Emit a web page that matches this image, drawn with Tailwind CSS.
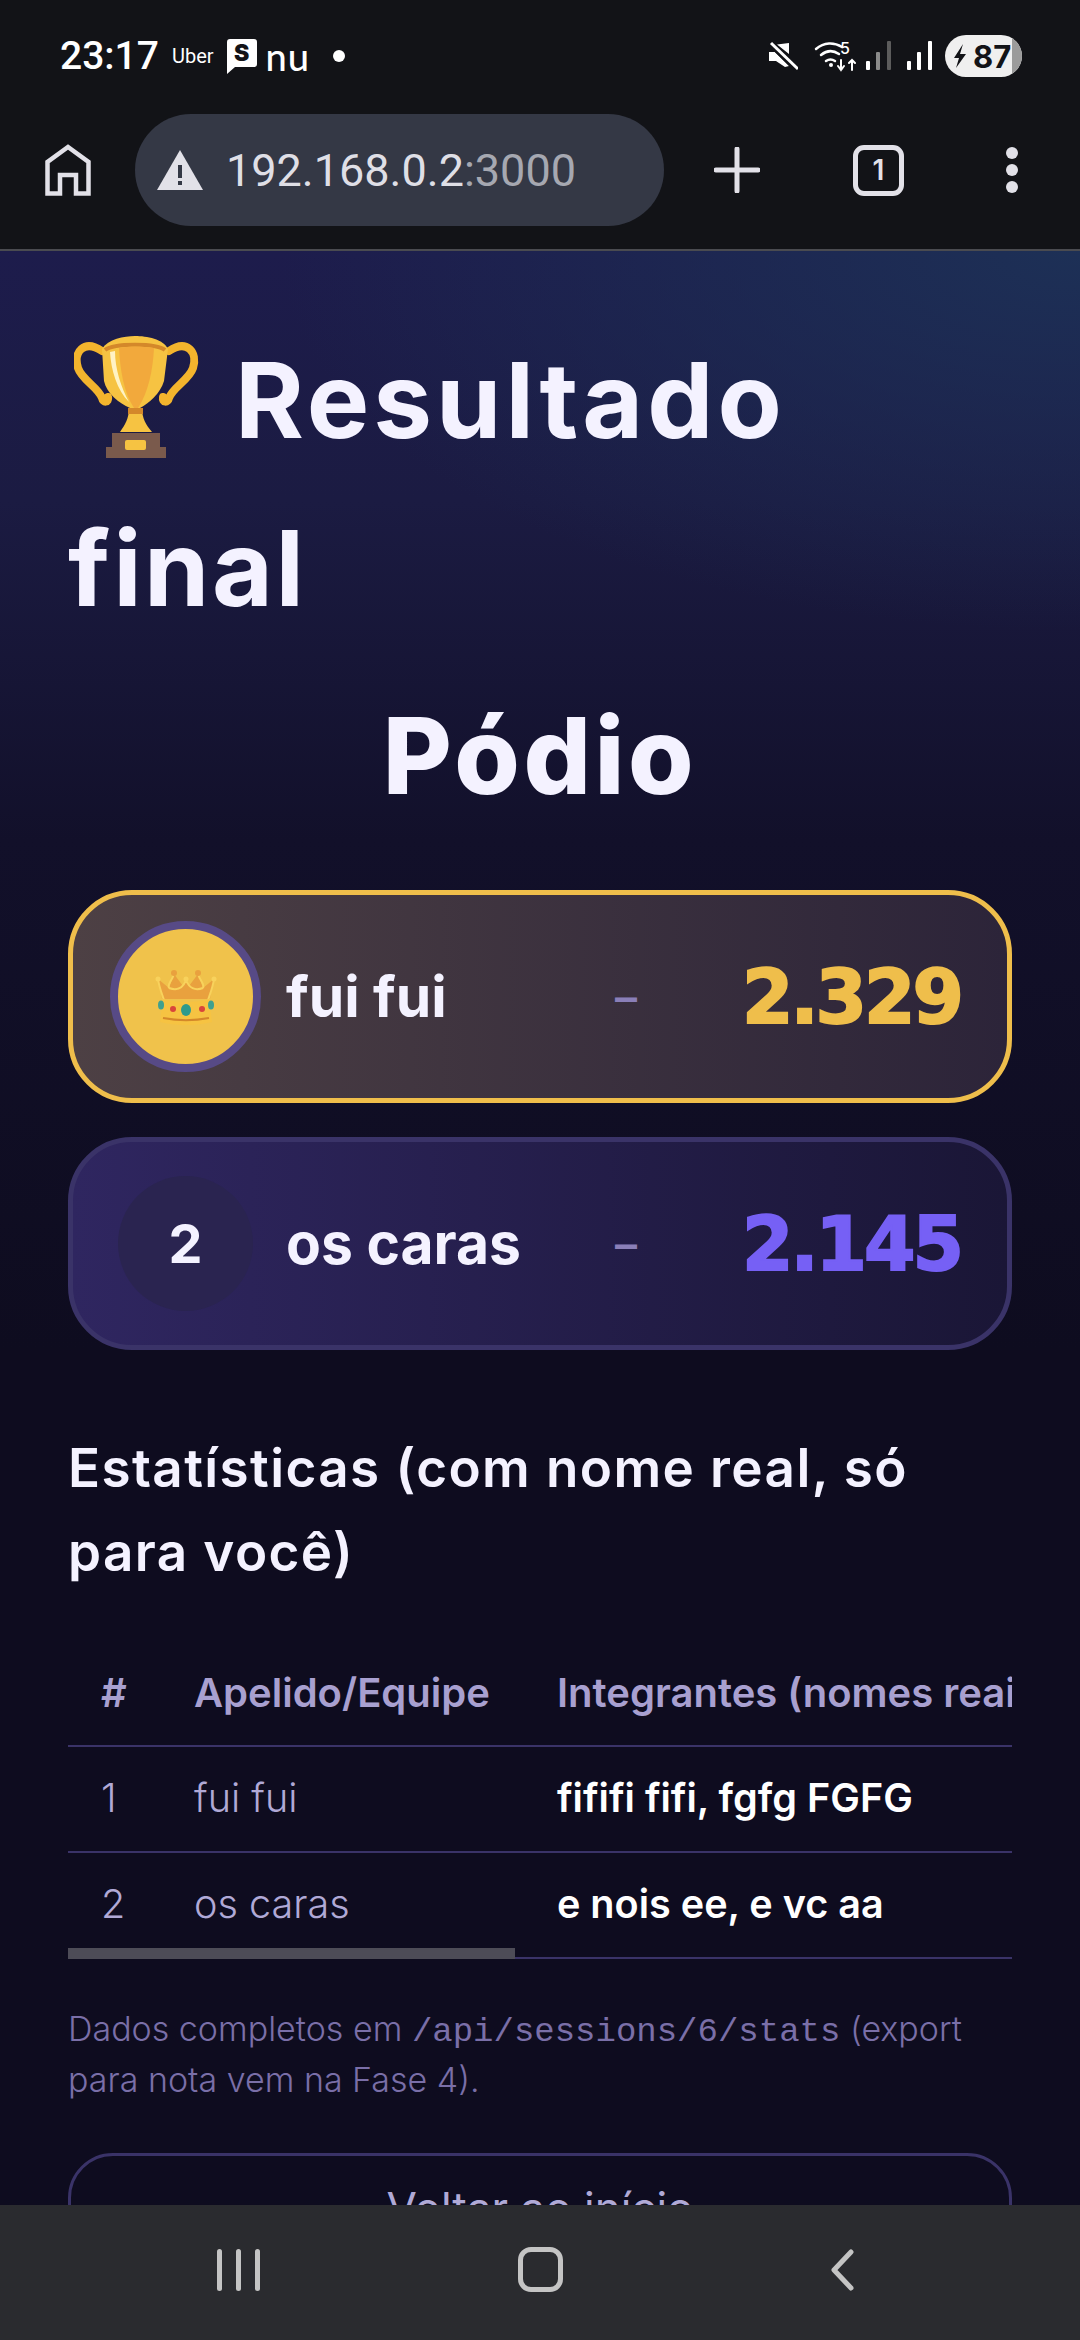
<!DOCTYPE html>
<html lang="pt-BR">
<head>
<meta charset="UTF-8">
<meta name="viewport" content="width=device-width, initial-scale=1.0">
<title>Resultado final</title>
<script src="https://cdn.jsdelivr.net/npm/@tailwindcss/browser@4"></script>
</head>
<body class="bg-[#0c0a1e] font-['Inter',sans-serif] text-[#f4f2ff]">
<div class="flex h-[2340px] w-[1080px] flex-col overflow-hidden">

  <!-- status bar + browser toolbar -->
  <header class="h-[251px] shrink-0 border-b-2 border-[#4a4b50] bg-[#121317]">
    <div class="flex h-[114px] items-center justify-between pl-[60px] pr-[58px] pb-[2px]">
      <div class="flex items-center">
        <span class="font-['Roboto',sans-serif] text-[39px] font-medium leading-none text-white">23:17</span>
        <span class="ml-[13px] font-['Roboto',sans-serif] text-[20px] leading-none text-white">Uber</span>
        <div class="relative ml-[13px] h-[35px] w-[30px]">
          <svg viewBox="0 0 30 35" class="h-[35px] w-[30px]"><path d="M3 0h24a3 3 0 0 1 3 3v22a3 3 0 0 1-3 3H8l-8 7V3a3 3 0 0 1 3-3z" fill="#fff"/></svg>
          <span class="absolute left-0 top-[2px] w-full text-center text-[23px] font-black leading-[24px] text-[#121317]">S</span>
        </div>
        <span class="ml-[9px] font-['Lato',sans-serif] text-[38px] font-medium leading-[30px] tracking-[1px] text-white">nu</span>
        <div class="ml-[23px] h-[12px] w-[12px] rounded-full bg-white"></div>
      </div>
      <div class="flex items-center">
        <svg viewBox="0 0 30 30" class="h-[30px] w-[30px]"><path d="M21 2v11L9 3.500zM1 11h6l14 14-4 1-9-6H1z" fill="#fff"/><path d="M2 3l27 26" stroke="#121317" stroke-width="5"/><path d="M3 2l27 26" stroke="#fff" stroke-width="3"/></svg>
        <svg viewBox="0 0 42 32" class="ml-[16px] h-[32px] w-[42px]" fill="none" stroke="#fff" stroke-linecap="round">
          <path d="M2 9c8-7 18-7 26-2" stroke-width="2.500"/><path d="M7 15c6-5 12-5 18-1" stroke-width="2.500"/><path d="M12 21c3-2 6-2 9 0" stroke-width="2.500"/><circle cx="17" cy="25" r="2" fill="#fff" stroke="none"/>
          <path d="M27 20v10M24 26l3 4 3-4M38 30V20M35 23l3-3 3 3" stroke-width="2"/>
        </svg>
        <span class="ml-[-16px] mt-[-16px] w-[16px] text-[16px] font-medium leading-none text-white">5</span>
        <svg viewBox="0 0 27 30" class="ml-[10px] h-[30px] w-[27px]"><rect x="0" y="20" width="4" height="9" rx="1" fill="#fff"/><rect x="10" y="11" width="4" height="18" rx="1" fill="#8a8a8a"/><rect x="21" y="0" width="4" height="29" rx="1" fill="#5c5c5c"/></svg>
        <svg viewBox="0 0 27 30" class="ml-[14px] h-[30px] w-[27px]"><rect x="0" y="20" width="4" height="9" rx="1" fill="#fff"/><rect x="10" y="11" width="4" height="18" rx="1" fill="#fff"/><rect x="21" y="0" width="4" height="29" rx="1" fill="#fff"/></svg>
        <div class="relative ml-[11px] flex h-[42px] w-[77px] items-center overflow-hidden rounded-full bg-[#efefef] pl-[8px]">
          <svg viewBox="0 0 14 24" class="h-[24px] w-[14px]"><path d="M10 0L1 14h5l-3 10 10-14H7z" fill="#121317"/></svg>
          <span class="ml-[6px] text-[31px] font-bold leading-none text-[#121317]">87</span>
          <div class="absolute inset-y-0 right-0 w-[10px] bg-[#9b9b9b]"></div>
        </div>
      </div>
    </div>
    <div class="flex items-start">
      <div class="flex h-[112px] w-[135px] items-center pl-[45px]">
        <svg viewBox="0 0 46 52" class="h-[52px] w-[46px]" fill="none" stroke="#e2e1e8" stroke-width="4.500"><path d="M2.500 49.500V18L23 3l20.500 15v31.500H31V31H15v18.500z"/></svg>
      </div>
      <div class="flex h-[112px] w-[529px] items-center rounded-full bg-[#343845] pl-[22px]">
        <svg viewBox="0 0 46 40" class="h-[40px] w-[46px]"><path d="M23 0l23 40H0z" fill="#e2e1e8"/><rect x="21" y="15" width="4" height="13" fill="#343845"/><rect x="21" y="31" width="4" height="4" fill="#343845"/></svg>
        <span class="ml-[23px] font-['Roboto',sans-serif] text-[45px] leading-none text-[#dfdfe6]">192.168.0.2<span class="text-[#a6a8b1]">:3000</span></span>
      </div>
      <div class="ml-[50px] flex h-[112px] items-center">
        <svg viewBox="0 0 46 46" class="h-[46px] w-[46px]"><path d="M23 2v42M2 23h42" stroke="#e2e1e8" stroke-width="5" stroke-linecap="round"/></svg>
      </div>
      <div class="ml-[93px] flex h-[112px] items-center">
        <div class="flex h-[51px] w-[51px] items-center justify-center rounded-[11px] border-[5px] border-[#e2e1e8] text-[28px] font-semibold leading-none text-[#e2e1e8]">1</div>
      </div>
      <div class="ml-[102px] flex h-[112px] flex-col items-center justify-center gap-[5px]">
        <div class="h-[12px] w-[12px] rounded-full bg-[#e2e1e8]"></div>
        <div class="h-[12px] w-[12px] rounded-full bg-[#e2e1e8]"></div>
        <div class="h-[12px] w-[12px] rounded-full bg-[#e2e1e8]"></div>
      </div>
    </div>
  </header>

  <!-- page -->
  <main class="min-h-0 flex-1 overflow-hidden bg-[radial-gradient(ellipse_800px_380px_at_100%_0%,#1d3056_0%,transparent_100%),linear-gradient(180deg,#1d1c4c_0px,#1b1b42_250px,#12102a_590px,#0e0c1f_1100px)] px-[68px] pt-[65px]">
    <h1 class="text-[105px] font-bold leading-[168px] tracking-[2.5px]">
      <svg viewBox="0 0 125 122" class="mb-[-20px] ml-[6px] mr-[36px] inline-block h-[122px] w-[125px] align-baseline">
        <path d="M28 15C10 3-1 16 4 32c4 12 20 19 24 30 1 5 7 5 6-1" fill="none" stroke="#f3b42d" stroke-width="8" stroke-linecap="round"/>
        <path d="M95 15c18-12 29 1 24 17-4 12-20 19-24 30-1 5-7 5-6-1" fill="none" stroke="#f3b42d" stroke-width="8" stroke-linecap="round"/>
        <path d="M28 13C34 3 50 0 61 0c12 0 28 3 33 13l-4 32c-4 13-15 22-24 27h-10C45 67 33 58 30 45z" fill="#f6c342"/>
        <path d="M31 14C40 7 82 7 91 14" fill="none" stroke="#d4882a" stroke-width="4"/>
        <path d="M45 12c10-2 22-2 35 0-1 22-6 45-16 60h-4C50 57 46 34 45 12z" fill="#f2a93c"/>
        <path d="M36 16l5-1c0 18 6 36 14 51C43 54 37 34 36 16z" fill="#fff3c4"/>
        <path d="M55 72h13c0 10 4 17 10 24H46c5-7 9-14 9-24z" fill="#f6c342"/>
        <path d="M54 72h15v6H54z" fill="#d4882a"/>
        <path d="M38 97h48v14h6v11H32v-11h6z" fill="#7a5a4c"/>
        <rect x="51" y="104" width="21" height="10" rx="2" fill="#f6c342"/>
      </svg><span class="tracking-[4px]">Resultado</span><br>final
    </h1>
    <h2 class="mt-[43px] text-center text-[106px] font-extrabold leading-[122px] tracking-[3.5px]">Pódio</h2>

    <div class="mt-[73px] flex flex-col gap-[34px]">
      <div class="flex h-[213px] items-center rounded-[64px] border-[5px] border-[#efbe4b] bg-[linear-gradient(90deg,#4d4044,#2c2439)] pl-[37px] pr-[46px]">
        <div class="flex h-[151px] w-[151px] shrink-0 items-center justify-center rounded-full border-[8px] border-[#574a86] bg-[#f0c24b]">
          <svg viewBox="0 0 62 58" class="mt-[2px] h-[58px] w-[62px]">
            <path d="M7 30C6 22 4 16 3 10l11 9L19 5l9 12 3-6 3 6 9-12 5 14 11-9c-1 6-3 12-4 20z" fill="#e9a13e"/>
            <path d="M3 10c1 8 4 15 7 24M59 10c-1 8-4 15-7 24M19 5c-2 7-7 10-5 14M43 5c2 7 7 10 5 14M14 19c8 3 14 0 17-8 3 8 9 11 17 8" fill="none" stroke="#f8d25c" stroke-width="2"/>
            <path d="M8 30c14 4 32 4 46 0l3 23c-14 4-38 4-52 0z" fill="#f6c342"/>
            <path d="M8 49c16 3 30 3 46 0" fill="none" stroke="#d4882a" stroke-width="2"/>
            <circle cx="3" cy="10" r="2.500" fill="#f8d25c"/><circle cx="59" cy="10" r="2.500" fill="#f8d25c"/><circle cx="19" cy="4" r="3" fill="#e9a13e"/><circle cx="43" cy="4" r="3" fill="#e9a13e"/><circle cx="31" cy="10" r="2.500" fill="#f8d25c"/>
            <ellipse cx="6" cy="36" rx="3" ry="4.500" fill="#3fa08f"/><ellipse cx="56" cy="36" rx="3" ry="4.500" fill="#3fa08f"/><circle cx="18" cy="40" r="3" fill="#d9453a"/><circle cx="47" cy="40" r="3" fill="#d9453a"/><ellipse cx="31" cy="41" rx="5" ry="6" fill="#2e9a8c"/>
          </svg>
        </div>
        <span class="ml-[25px] w-[329px] text-[57px] font-bold leading-none">fui fui</span>
        <span class="w-[20px] text-center text-[44px] font-semibold leading-none text-[#8a7fb8]">–</span>
        <span class="ml-auto font-['DejaVu_Sans',sans-serif] text-[74px] font-bold leading-none tracking-[-3px] text-[#efbe4b] [-webkit-text-stroke:2px_#efbe4b]">2.329</span>
      </div>
      <div class="flex h-[213px] items-center rounded-[64px] border-[5px] border-[#3a3368] bg-[linear-gradient(90deg,#2f2660,#1a1636)] pl-[45px] pr-[46px]">
        <div class="flex h-[135px] w-[135px] shrink-0 items-center justify-center rounded-full bg-[#2a2450] text-[54px] font-bold leading-none">2</div>
        <span class="ml-[33px] w-[329px] text-[57px] font-bold leading-none">os caras</span>
        <span class="w-[20px] text-center text-[44px] font-semibold leading-none text-[#8a7fb8]">–</span>
        <span class="ml-auto font-['DejaVu_Sans',sans-serif] text-[74px] font-bold leading-none tracking-[-3px] text-[#7660f5] [-webkit-text-stroke:2px_#7660f5]">2.145</span>
      </div>
    </div>

    <h3 class="mt-[76px] text-[53px] font-semibold leading-[84px] tracking-[1.4px]">Estatísticas (com nome real, só para você)</h3>

    <div class="relative mt-[47px] overflow-hidden">
      <table class="w-[1300px] table-fixed border-collapse text-left">
        <colgroup><col class="w-[126px]"><col class="w-[363px]"><col></colgroup>
        <thead>
          <tr class="h-[105px] border-b-2 border-[#3a3368] text-[40px] text-[#a8a0d0]">
            <th class="pl-[33px] font-semibold">#</th>
            <th class="font-semibold">Apelido/Equipe</th>
            <th class="whitespace-nowrap font-semibold">Integrantes (nomes reais)</th>
          </tr>
        </thead>
        <tbody class="text-[39.6px]">
          <tr class="h-[106px] border-b-2 border-[#3a3368]">
            <td class="pl-[33px] font-light text-[#b0a9d6]">1</td>
            <td class="font-light text-[#b0a9d6]">fui fui</td>
            <td class="font-semibold text-white">fififi fifi, fgfg FGFG</td>
          </tr>
          <tr class="h-[106px] border-b-2 border-[#3a3368]">
            <td class="pl-[33px] font-light text-[#b0a9d6]">2</td>
            <td class="font-light text-[#b0a9d6]">os caras</td>
            <td class="font-semibold text-white">e nois ee, e vc aa</td>
          </tr>
        </tbody>
      </table>
      <div class="absolute bottom-0 left-0 h-[11px] w-[447px] bg-[#4d4c57]"></div>
    </div>

    <p class="mt-[44px] text-[34px] font-light leading-[51px] text-[#7a6fa8]">Dados completos em <code class="font-['Liberation_Mono',monospace] text-[34px] leading-none">/api/sessions/6/stats</code> (export para nota vem na Fase 4).</p>

    <a class="mt-[48px] flex h-[110px] items-center justify-center rounded-[45px] border-[3px] border-[#3a3368] text-[44px] font-normal text-[#b0a9d6]">Voltar ao início</a>
  </main>

  <!-- android nav -->
  <nav class="flex h-[135px] shrink-0 items-center bg-[#2a2b2f] pb-[6px]">
    <div class="ml-[217px] flex h-[42px] gap-[14px]">
      <div class="w-[5px] rounded-full bg-[#c4c4c4]"></div>
      <div class="w-[5px] rounded-full bg-[#c4c4c4]"></div>
      <div class="w-[5px] rounded-full bg-[#c4c4c4]"></div>
    </div>
    <div class="ml-[258px] h-[45px] w-[45px] rounded-[13px] border-[5px] border-[#c4c4c4]"></div>
    <svg viewBox="0 0 24 42" class="ml-[267px] h-[42px] w-[24px]"><path d="M21 3L4 21l17 18" fill="none" stroke="#c4c4c4" stroke-width="5" stroke-linecap="round" stroke-linejoin="round"/></svg>
  </nav>
</div>
</body>
</html>
